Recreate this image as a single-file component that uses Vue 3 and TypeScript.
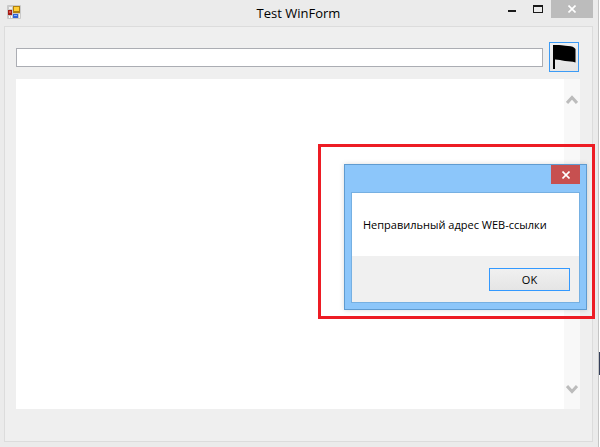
<script setup lang="ts">
import { ref } from 'vue'

const address = ref('')
const dialogOpen = ref(true)
</script>

<template>
  <div class="desktop">
    <main class="window">
      <header class="titlebar">
        <svg class="app-icon" viewBox="0 0 14 14" aria-hidden="true">
          <rect width="14" height="14" rx="1" fill="#c9c9c9" />
          <rect x="2" y="2" width="3" height="2" fill="#f0f0f0" />
          <rect x="1" y="5" width="4" height="5" fill="#a51a14" />
          <rect x="2" y="6" width="2" height="2" fill="#d8554a" />
          <rect x="6" y="1" width="7" height="7" fill="#b08010" />
          <rect x="7" y="2" width="5" height="4" fill="#ffcf35" />
          <rect x="6" y="9" width="5" height="4" fill="#2f62d4" />
          <rect x="7" y="10" width="3" height="1" fill="#86b3ff" />
          <rect x="2" y="11" width="1" height="2" fill="#fff" />
          <rect x="4" y="11" width="1" height="2" fill="#fff" />
          <rect x="12" y="9" width="1" height="4" fill="#f4f4f4" />
        </svg>
        <h1 class="title">Test WinForm</h1>
        <div class="controls">
          <button class="control" type="button" aria-label="Minimize">
            <svg viewBox="0 0 10 10" width="10" height="10"><rect x="1" y="6" width="8" height="2" fill="#1a1a1a" /></svg>
          </button>
          <button class="control" type="button" aria-label="Maximize">
            <svg viewBox="0 0 10 10" width="10" height="10">
              <path d="M0 1H10V9H0ZM1 3V8H9V3Z" fill="#1a1a1a" fill-rule="evenodd" />
            </svg>
          </button>
          <button class="control close" type="button" aria-label="Close">
            <svg viewBox="0 0 8 8" width="8" height="8"><path d="M.5 .5L7.5 7.5M7.5 .5L.5 7.5" stroke="#fff" stroke-width="1.6" /></svg>
          </button>
        </div>
      </header>

      <section class="client">
        <form class="toolbar" @submit.prevent="dialogOpen = true">
          <input v-model="address" class="address" type="text" aria-label="Address" />
          <button class="go" type="submit" aria-label="Go">
            <svg viewBox="0 0 26 26" width="26" height="26" aria-hidden="true">
              <path d="M2 1H8C12 1 13 2 17 2C21 2 23 3 24.5 5V18.5C21 17 18 17.5 14 17C10 16.500 8 15.500 4 15.500V25H2Z" fill="#000" />
            </svg>
          </button>
        </form>
        <div class="browser">
          <div class="page"></div>
          <div class="scrollbar">
            <button class="arrow" type="button" aria-label="Scroll up">
              <svg viewBox="0 0 12 9" width="12" height="9"><path d="M1 8L6 2.5L11 8" fill="none" stroke="#bcbcbc" stroke-width="3" /></svg>
            </button>
            <button class="arrow" type="button" aria-label="Scroll down">
              <svg viewBox="0 0 12 9" width="12" height="9"><path d="M1 1L6 6.5L11 1" fill="none" stroke="#bcbcbc" stroke-width="3" /></svg>
            </button>
          </div>
        </div>
      </section>
    </main>
    <div class="behind"><div class="behind-item"></div></div>

    <div v-if="dialogOpen" class="highlight">
      <div class="dialog" role="alertdialog" aria-describedby="message">
        <div class="dialog-bar">
          <button class="dialog-close" type="button" aria-label="Close dialog" @click="dialogOpen = false">
            <svg viewBox="0 0 8 8" width="8" height="8"><path d="M.5 .5L7.5 7.5M7.5 .5L.5 7.5" stroke="#fff" stroke-width="1.6" /></svg>
          </button>
        </div>
        <div class="dialog-body">
          <p id="message" class="message">Неправильный адрес WEB-ссылки</p>
          <div class="dialog-footer">
            <button class="ok" type="button" @click="dialogOpen = false">OK</button>
          </div>
        </div>
      </div>
    </div>
  </div>
</template>

<style>
body {
  background: #fff;
}
</style>

<style scoped>
.desktop,
.desktop * {
  box-sizing: border-box;
}

.desktop {
  position: relative;
  display: flex;
  min-height: 100vh;
  font-family: "Open Sans", "Noto Sans", sans-serif;
  color: #000;
}

button {
  display: flex;
  align-items: center;
  justify-content: center;
  padding: 0;
  border: 0;
  background: none;
  font: inherit;
  color: inherit;
}

svg {
  display: block;
}

.window {
  flex: 1;
  display: flex;
  flex-direction: column;
  padding: 0 5px 5px 4px;
  border-right: 1px solid #c4c4c4;
  background: #ebebeb;
}

.titlebar {
  display: grid;
  grid-template-columns: 1fr auto 1fr;
  height: 26px;
}

.app-icon {
  width: 14px;
  height: 14px;
  margin: 5px 0 0 3px;
}

.title {
  margin: 0;
  font-size: 13px;
  font-weight: 400;
  line-height: 26px;
}

.controls {
  display: flex;
  justify-content: flex-end;
}

.control {
  width: 26px;
  height: 18px;
}

.close {
  width: 42px;
  background: #bcbcbc;
}

.client {
  flex: 1;
  display: flex;
  flex-direction: column;
  gap: 7px;
  padding: 15px 12px 32px 11px;
  border: 1px solid #dcdcdc;
  background: #efefef;
}

.toolbar {
  display: flex;
  align-items: center;
  gap: 6px;
  padding-right: 1px;
}

.address {
  flex: 1;
  min-width: 0;
  height: 19px;
  padding: 0 4px;
  border: 1px solid #abadb3;
  background: #fff;
  font: inherit;
  font-size: 11px;
  outline: 0;
}

.go {
  width: 30px;
  height: 30px;
  border: 1px solid #3c9bf5;
  background: linear-gradient(#f0f0f0, #e5e5e5);
}

.browser {
  flex: 1;
  display: flex;
  background: #fff;
}

.page {
  flex: 1;
}

.scrollbar {
  display: flex;
  flex-direction: column;
  justify-content: space-between;
  width: 16px;
  padding: 12px 0;
  background: #f8f8f8;
}

.arrow {
  height: 16px;
}

.behind {
  width: 1px;
  padding-top: 352px;
}

.behind-item {
  height: 23px;
  background: #35405a;
}

.highlight {
  position: absolute;
  top: 144px;
  right: 5px;
  padding: 17px 5px 6px 23px;
  border: 3px solid #ed1c24;
}

.dialog {
  width: 243px;
  padding: 0 6px 6px;
  border: 1px solid #5f9bd0;
  background: #8cc6fa;
  box-shadow: 0 0 5px rgba(0, 0, 0, 0.15);
}

.dialog-bar {
  display: flex;
  justify-content: flex-end;
  height: 27px;
}

.dialog-close {
  width: 29px;
  height: 19px;
  background: #c75050;
}

.dialog-body {
  border: 1px solid #76b0e2;
  background: #fff;
}

.message {
  margin: 0;
  padding: 24px 11px 23px;
  font-size: 11px;
  line-height: 16px;
  white-space: nowrap;
}

.dialog-footer {
  display: flex;
  justify-content: flex-end;
  padding: 12px 9px 11px;
  background: #f0f0f0;
}

.ok {
  width: 81px;
  height: 23px;
  border: 1px solid #3399ff;
  background: linear-gradient(#f0f0f0, #e5e5e5);
  font-size: 11px;
}
</style>
